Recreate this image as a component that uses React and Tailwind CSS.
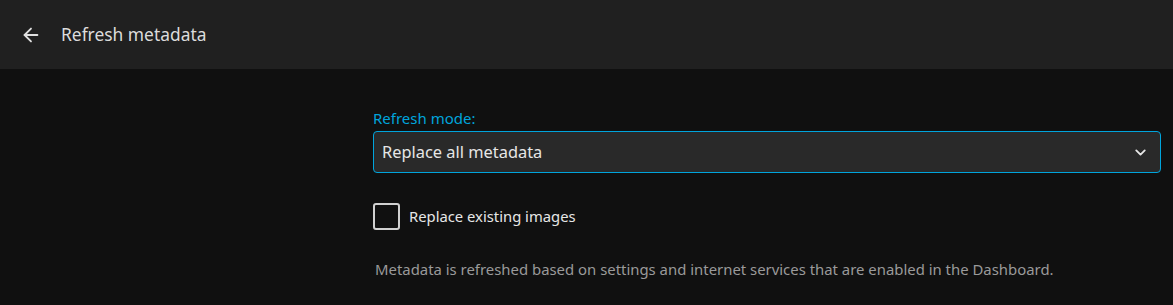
import { ArrowLeft, ChevronDown } from "lucide-react";

export default function App() {
  return (
    <div className="w-[1173px] h-[305px] bg-[#101010] font-['Noto_Sans',sans-serif] overflow-hidden">
      <div className="h-[69px] bg-[#202020] flex items-center pl-[20px]">
        <ArrowLeft size={22} strokeWidth={2} className="text-[#e0e0e0]" />
        <h1 className="ml-[19px] text-[17.4px] text-[#dcdcdc]">Refresh metadata</h1>
      </div>

      <div className="ml-[373px] mr-[12px] pt-[39px]">
        <label className="block text-[15px] leading-[20px] text-[#00a4dc] mb-[3px]">
          Refresh mode:
        </label>
        <div className="h-[42px] rounded-[4px] border border-[#00a4dc] bg-[#292929] flex items-center justify-between pl-[8px] pr-[11px]">
          <span className="text-[16.4px] text-[#e6e6e6]">Replace all metadata</span>
          <ChevronDown size={17} strokeWidth={2.6} className="text-[#e6e6e6]" />
        </div>

        <div className="flex items-center mt-[30px]">
          <div className="w-[27px] h-[27px] rounded-[3px] border-2 border-[#d0d0d0]" />
          <span className="ml-[9px] text-[14.8px] text-[#e6e6e6]">Replace existing images</span>
        </div>

        <p className="mt-[29px] ml-[2px] text-[14.9px] leading-[20px] text-[#9a9a9a]">
          Metadata is refreshed based on settings and internet services that are enabled in the Dashboard.
        </p>
      </div>
    </div>
  );
}
